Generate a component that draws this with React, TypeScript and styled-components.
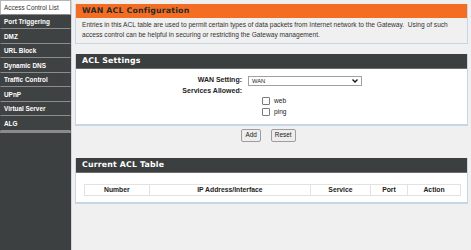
import React from 'react'
import styled, { createGlobalStyle } from 'styled-components'

const GlobalStyle = createGlobalStyle`
  html, body {
    margin: 0;
    padding: 0;
    width: 471px;
    height: 250px;
    overflow: hidden;
    background: #f0f0f0;
    font-family: 'Liberation Sans', Arial, sans-serif;
  }
`

const Page = styled.div`
  display: flex;
  width: 471px;
  height: 250px;
`

const Sidebar = styled.nav`
  width: 71px;
  flex-shrink: 0;
  background: #3d4040;
  border-right: 1px solid #d4d4d4;
  display: flex;
  flex-direction: column;
`

const MenuItem = styled.div<{ $active?: boolean }>`
  box-sizing: border-box;
  height: 14.5px;
  display: flex;
  align-items: center;
  padding-left: 3px;
  font-size: 6.4px;
  font-weight: ${p => (p.$active ? 'normal' : 'bold')};
  color: ${p => (p.$active ? '#333' : '#fff')};
  background: ${p => (p.$active ? '#fff' : '#3f4242')};
  border: 1px solid ${p => (p.$active ? '#b5b5b5' : '#3f4242')};
  border-bottom: 1px solid #8c8c8c;
  white-space: nowrap;
  overflow: hidden;
`

const MenuEnd = styled.div`
  height: 2px;
  background: #8a8a8a;
`

const Main = styled.main`
  flex: 1;
  padding: 4px 3px 0 3px;
  display: flex;
  flex-direction: column;
`

const Box = styled.section`
  border: 1px solid #c6d6e6;
  border-top: none;
  background: #fff;
`

const OrangeHead = styled.div`
  height: 14px;
  line-height: 14px;
  background: #f36e23;
  color: #2a2a2a;
  font-family: 'DejaVu Sans', Verdana, sans-serif;
  font-weight: bold;
  font-size: 7.8px;
  padding-left: 6px;
  letter-spacing: 0.2px;
`

const DarkHead = styled(OrangeHead)`
  background: #3c3f3f;
  color: #fff;
  border-bottom: 1px solid #6a6d6d;
`

const Desc = styled.div`
  background: #f0f0f0;
  color: #333;
  font-size: 6.6px;
  line-height: 10px;
  padding: 2px 6px 3px 6px;
  height: 20px;
`

const SettingsBox = styled(Box)`
  margin-top: 10px;
  border-bottom: 2px solid #c6d6e6;
`

const FormGrid = styled.div`
  display: grid;
  grid-template-columns: 166px 1fr;
  column-gap: 6px;
  padding: 6px 0 8px 0;
  font-size: 7px;
  color: #222;
`

const Label = styled.div`
  text-align: right;
  font-weight: bold;
  line-height: 10px;
`

const Select = styled.div`
  width: 106px;
  height: 8px;
  border: 1px solid #a0a0a0;
  display: flex;
  align-items: center;
  justify-content: space-between;
  padding: 0 3px;
  font-size: 5.8px;
  margin-top: 0.5px;
  box-sizing: content-box;
`

const Checks = styled.div`
  padding-left: 14px;
  display: flex;
  flex-direction: column;
  gap: 3px;
  padding-top: 1px;
`

const CheckRow = styled.label`
  display: flex;
  align-items: center;
  gap: 4px;
  line-height: 7px;
  font-size: 6.6px;
`

const CheckBox = styled.span`
  width: 6px;
  height: 6px;
  border: 1px solid #7a7a7a;
  border-radius: 1px;
  background: #fff;
  display: inline-block;
`

const ButtonRow = styled.div`
  display: flex;
  justify-content: center;
  gap: 10px;
  margin-top: 3px;
  padding-right: 6px;
`

const Button = styled.button`
  height: 13px;
  padding: 0 3px;
  font-family: 'Liberation Sans', Arial, sans-serif;
  font-size: 6.4px;
  color: #222;
  background: #ededed;
  border: 1px solid #9d9d9d;
  border-radius: 2px;
  line-height: 10px;
`

const TableBox = styled(Box)`
  margin-top: 16px;
  border-bottom: 2px solid #c6d6e6;
`

const TableWrap = styled.div`
  padding: 11px 6px 6px 8px;
`

const Table = styled.table`
  width: 100%;
  border-collapse: collapse;
  font-size: 6.8px;
  font-weight: bold;
  color: #222;
`

const Th = styled.th<{ $w: number }>`
  width: ${p => p.$w}px;
  height: 10px;
  padding: 0;
  border: 1px solid #e2e2e2;
  text-align: center;
`

const menu = [
  'Access Control List',
  'Port Triggering',
  'DMZ',
  'URL Block',
  'Dynamic DNS',
  'Traffic Control',
  'UPnP',
  'Virtual Server',
  'ALG',
]

const columns: [string, number][] = [
  ['Number', 65],
  ['IP Address/Interface', 164],
  ['Service', 60],
  ['Port', 37],
  ['Action', 53],
]

const App: React.FC = () => {
  return (
    <>
      <GlobalStyle />
      <Page>
        <Sidebar>
          {menu.map((m, i) => (
            <MenuItem key={m} $active={i === 0}>
              {m}
            </MenuItem>
          ))}
          <MenuEnd />
        </Sidebar>
        <Main>
          <Box>
            <OrangeHead>WAN ACL Configuration</OrangeHead>
            <Desc>
              Entries in this ACL table are used to permit certain types of data packets from Internet network to the Gateway.&nbsp;&nbsp;Using of such
              access control can be helpful in securing or restricting the Gateway management.
            </Desc>
          </Box>

          <SettingsBox>
            <DarkHead>ACL Settings</DarkHead>
            <FormGrid>
              <Label>WAN Setting:</Label>
              <div>
                <Select>
                  <span>WAN</span>
                  <svg width="6" height="4" viewBox="0 0 6 4">
                    <path d="M0.5 0.5 L3 3 L5.5 0.5" stroke="#111" strokeWidth="1.3" fill="none" />
                  </svg>
                </Select>
              </div>
              <Label>Services Allowed:</Label>
              <div />
              <div />
              <Checks>
                <CheckRow>
                  <CheckBox />
                  web
                </CheckRow>
                <CheckRow>
                  <CheckBox />
                  ping
                </CheckRow>
              </Checks>
            </FormGrid>
          </SettingsBox>

          <ButtonRow>
            <Button>Add</Button>
            <Button>Reset</Button>
          </ButtonRow>

          <TableBox>
            <DarkHead>Current ACL Table</DarkHead>
            <TableWrap>
              <Table>
                <thead>
                  <tr>
                    {columns.map(([c, w]) => (
                      <Th key={c} $w={w}>
                        {c}
                      </Th>
                    ))}
                  </tr>
                </thead>
              </Table>
            </TableWrap>
          </TableBox>
        </Main>
      </Page>
    </>
  )
}

export default App
